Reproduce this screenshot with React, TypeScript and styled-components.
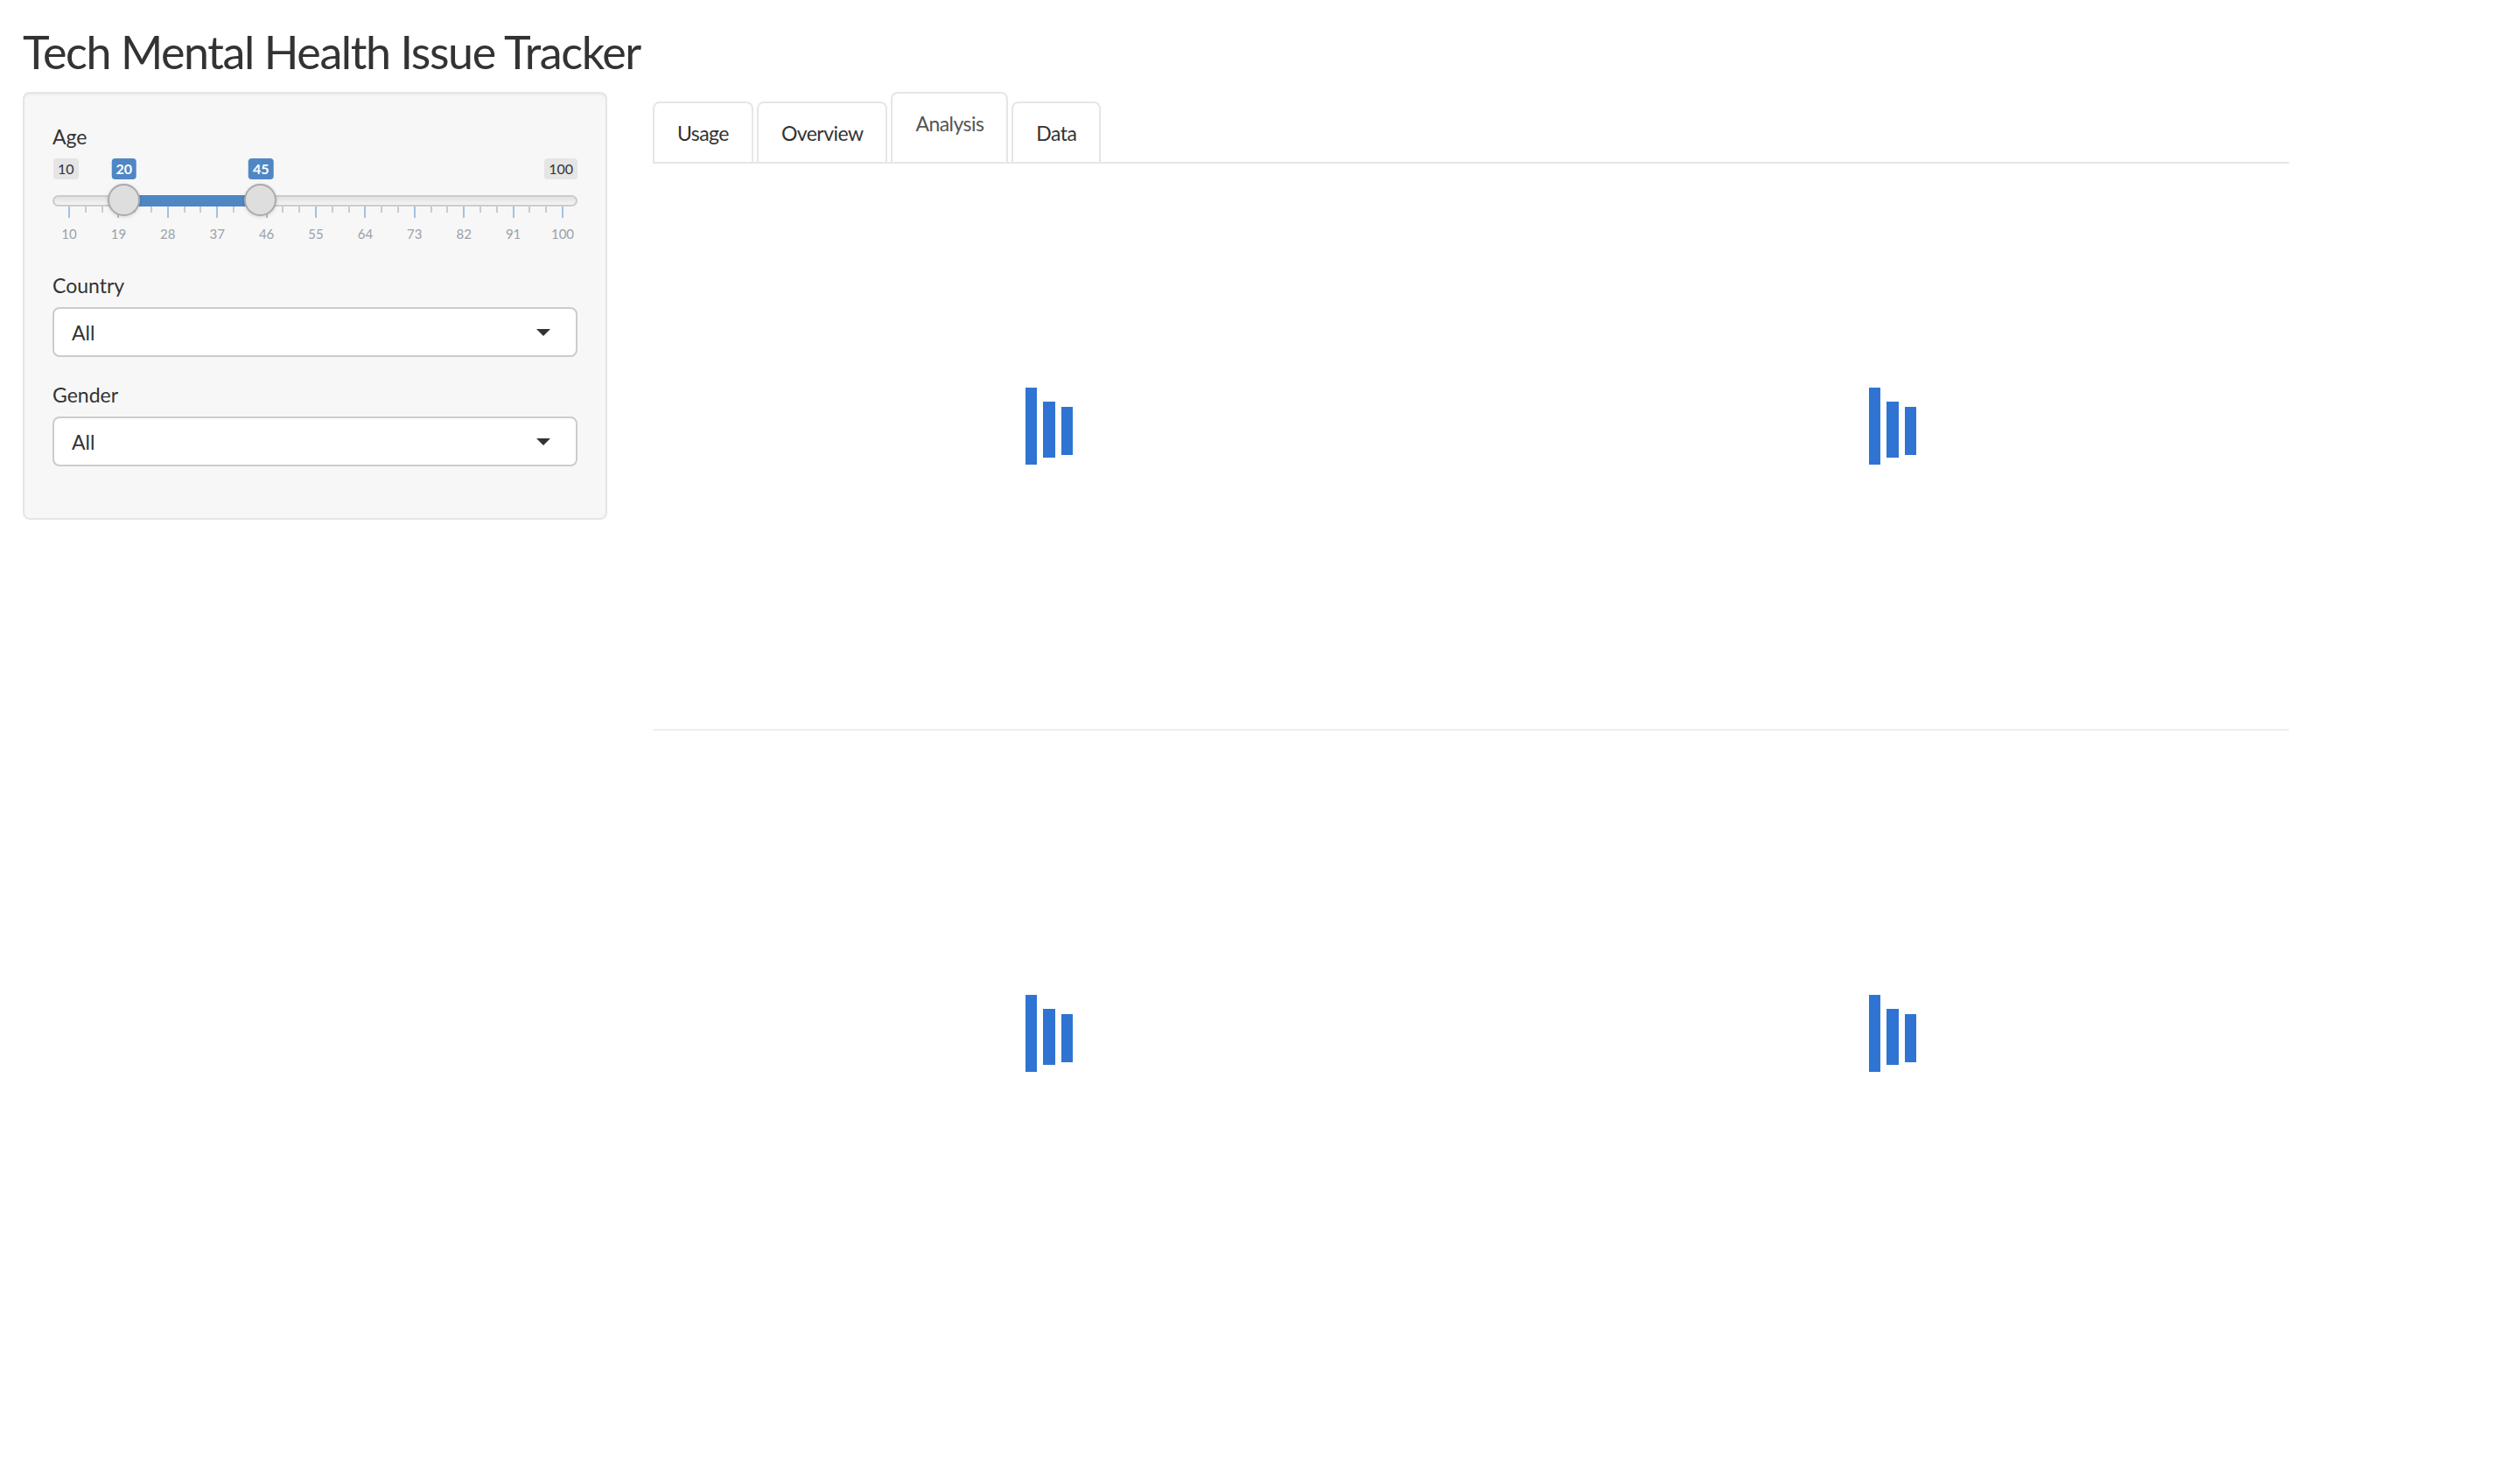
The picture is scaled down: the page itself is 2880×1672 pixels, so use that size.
import React from 'react'
import styled, { createGlobalStyle } from 'styled-components'

const GlobalStyle = createGlobalStyle`
    html, body {
        margin: 0;
        padding: 0;
        background: #ffffff;
    }
    body {
        font-family: 'Lato', 'Liberation Sans', sans-serif;
        color: #333333;
    }
    * {
        box-sizing: border-box;
    }
`

const MIN = 10
const MAX = 100
const FROM = 20
const TO = 45
const majorTicks = [10, 19, 28, 37, 46, 55, 64, 73, 82, 91, 100]
const minorTicks = majorTicks.slice(0, -1).flatMap(v => [v + 3, v + 6])
const pct = (v: number) => ((v - MIN) / (MAX - MIN)) * 100

const tabs = ['Usage', 'Overview', 'Analysis', 'Data']

const Spinner = () => (
    <svg width="54" height="88" viewBox="0 0 54 88">
        <rect x="0" y="0" width="13" height="88" fill="#2f74d2" />
        <rect x="20" y="16" width="14" height="64" fill="#2f74d2" />
        <rect x="41" y="22" width="13" height="55" fill="#2f74d2" />
    </svg>
)

const Caret = () => (
    <svg width="16" height="8" viewBox="0 0 16 8">
        <path d="M0 0 L16 0 L8 8 Z" fill="#333" />
    </svg>
)

const SelectInput = ({ label, value }: { label: string; value: string }) => (
    <FormGroup>
        <Label>{label}</Label>
        <Select>
            <span>{value}</span>
            <Caret />
        </Select>
    </FormGroup>
)

const App = () => {
    return (
        <Page>
            <GlobalStyle />
            <Title>Tech Mental Health Issue Tracker</Title>
            <Layout>
                <Sidebar>
                    <SliderGroup>
                        <Label>Age</Label>
                        <Slider>
                            <EdgeLabel side="left">{MIN}</EdgeLabel>
                            <EdgeLabel side="right">{MAX}</EdgeLabel>
                            <Track />
                            <Scale>
                                <Bar style={{ left: `${pct(FROM)}%`, width: `${pct(TO) - pct(FROM)}%` }} />
                                {minorTicks.map(v => (
                                    <Tick key={`m${v}`} style={{ left: `${pct(v)}%` }} />
                                ))}
                                {majorTicks.map(v => (
                                    <React.Fragment key={v}>
                                        <Tick major style={{ left: `${pct(v)}%` }} />
                                        <TickLabel style={{ left: `${pct(v)}%` }}>{v}</TickLabel>
                                    </React.Fragment>
                                ))}
                                {[FROM, TO].map(v => (
                                    <React.Fragment key={`h${v}`}>
                                        <ValueLabel style={{ left: `${pct(v)}%` }}>{v}</ValueLabel>
                                        <Handle style={{ left: `${pct(v)}%` }} />
                                    </React.Fragment>
                                ))}
                            </Scale>
                        </Slider>
                    </SliderGroup>
                    <SelectInput label="Country" value="All" />
                    <SelectInput label="Gender" value="All" />
                </Sidebar>
                <Main>
                    <TabList>
                        {tabs.map(t => (
                            <Tab key={t} active={t === 'Analysis'}>{t}</Tab>
                        ))}
                    </TabList>
                    <PlotRow>
                        <PlotBox><Spinner /></PlotBox>
                        <PlotBox><Spinner /></PlotBox>
                    </PlotRow>
                    <Rule />
                    <PlotRow>
                        <PlotBox><Spinner /></PlotBox>
                        <PlotBox><Spinner /></PlotBox>
                    </PlotRow>
                </Main>
            </Layout>
        </Page>
    )
}

export default App

const Page = styled.div`
    padding: 0 26px;
    min-height: 1672px;
`

const Title = styled.h1`
    margin: 28px 0 15px;
    font-size: 52px;
    line-height: 62px;
    font-weight: 400;
    letter-spacing: -1.4px;
    color: #333333;
`

const Layout = styled.div`
    display: flex;
    align-items: flex-start;
    gap: 52px;
`

const Sidebar = styled.div`
    width: 668px;
    flex-shrink: 0;
    background: #f7f7f7;
    border: 2px solid #e5e5e5;
    border-radius: 8px;
    box-shadow: inset 0 2px 2px rgba(0, 0, 0, 0.04);
    padding: 34px 32px 31px;
`

const FormGroup = styled.div`
    margin-bottom: 28px;
`

const SliderGroup = styled(FormGroup)`
    margin-bottom: 35px;
`

const Label = styled.div`
    font-size: 23px;
    line-height: 30px;
    color: #333333;
    margin-bottom: 10px;
`

const Slider = styled.div`
    position: relative;
    height: 95px;
    margin-top: 1px;
`

const EdgeLabel = styled.span<{ side: 'left' | 'right' }>`
    position: absolute;
    top: 0;
    ${p => (p.side === 'left' ? 'left: 1px;' : 'right: 0;')}
    height: 24px;
    padding: 0 5px;
    border-radius: 4px;
    background: #e5e5e5;
    color: #333333;
    font-size: 16px;
    line-height: 24px;
`

const Track = styled.div`
    position: absolute;
    left: 0;
    right: 0;
    top: 42px;
    height: 13px;
    border: 2px solid #cccccc;
    border-radius: 7px;
    background: linear-gradient(#e2e2e2, #f4f4f4);
`

const Scale = styled.div`
    position: absolute;
    left: 19px;
    right: 17px;
    top: 0;
    bottom: 0;
`

const Bar = styled.div`
    position: absolute;
    top: 42px;
    height: 13px;
    background: #4f87c5;
`

const Tick = styled.div<{ major?: boolean }>`
    position: absolute;
    top: 55px;
    width: 2px;
    margin-left: -1px;
    height: ${p => (p.major ? '13px' : '7px')};
    background: ${p => (p.major ? '#a3c1e2' : '#cbcbcb')};
`

const TickLabel = styled.span`
    position: absolute;
    top: 77px;
    transform: translateX(-50%);
    font-size: 15px;
    line-height: 18px;
    color: #99a1a9;
`

const ValueLabel = styled.span`
    position: absolute;
    top: 0;
    transform: translateX(-50%);
    height: 24px;
    padding: 0 5px;
    border-radius: 4px;
    background: #4f87c5;
    color: #ffffff;
    font-size: 16px;
    font-weight: 700;
    line-height: 24px;
`

const Handle = styled.div`
    position: absolute;
    top: 29px;
    width: 37px;
    height: 37px;
    margin-left: -19px;
    border-radius: 50%;
    background: #dedede;
    border: 2px solid #ababab;
    box-shadow: 0 1px 4px rgba(0, 0, 0, 0.15);
`

const Select = styled.div`
    display: flex;
    align-items: center;
    justify-content: space-between;
    height: 57px;
    padding: 0 29px 0 20px;
    background: #ffffff;
    border: 2px solid #cccccc;
    border-radius: 8px;
    font-size: 23px;
    color: #333333;
`

const Main = styled.div`
    width: 1870px;
`

const TabList = styled.div`
    display: flex;
    align-items: flex-end;
    gap: 4px;
    height: 82px;
    border-bottom: 2px solid #e6e6e6;
`

const Tab = styled.div<{ active?: boolean }>`
    padding: 16px 26px ${p => (p.active ? '26px' : '15px')};
    font-size: 23px;
    line-height: 36px;
    letter-spacing: -0.55px;
    color: ${p => (p.active ? '#555555' : '#333333')};
    background: #ffffff;
    border: 2px solid #e6e6e6;
    border-bottom: none;
    border-radius: 8px 8px 0 0;
`

const PlotRow = styled.div`
    display: grid;
    grid-template-columns: 1fr 1fr;
    column-gap: 58px;
`

const PlotBox = styled.div`
    height: 600px;
    display: flex;
    align-items: center;
    justify-content: center;
`

const Rule = styled.hr`
    margin: 46px 0;
    border: none;
    border-top: 2px solid #eeeeee;
`
